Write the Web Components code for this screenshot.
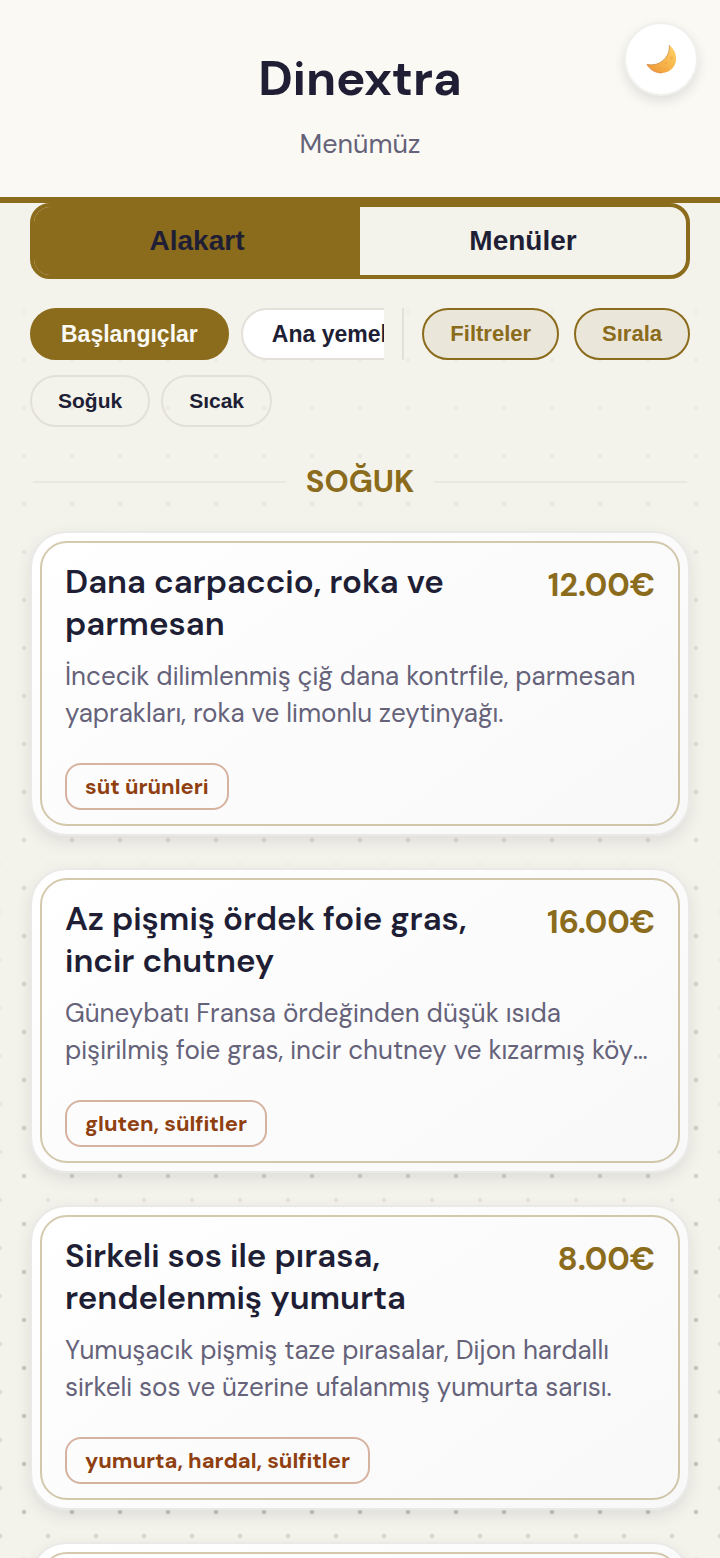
<!DOCTYPE html>
<html lang="tr">
<head>
<meta charset="utf-8">
<meta name="viewport" content="width=device-width, initial-scale=1">
<title>Dinextra</title>
<style>
  :root {
    --gold: #8b6b1c;
    --ink: #201e35;
    --muted: #656279;
    --paper: #f4f3eb;
    --line: #e2e0d9;
    --ui: "Liberation Sans", Arial, sans-serif;
  }
  html, body { margin: 0; height: 100%; }
  body {
    background: var(--paper);
    color: var(--ink);
    font-family: "DM Sans", Inter, sans-serif;
  }
</style>
</head>
<body>
<menu-page>
  <menu-header slot="header" heading="Dinextra" tagline="Menümüz"></menu-header>
  <menu-tabs slot="nav" labels="Alakart|Menüler"></menu-tabs>
  <menu-filters slot="nav">
    <menu-chip slot="category" kind="active">Başlangıçlar</menu-chip>
    <menu-chip slot="category" kind="solid">Ana yemekler</menu-chip>
    <menu-chip slot="action" kind="tool">Filtreler</menu-chip>
    <menu-chip slot="action" kind="tool">Sırala</menu-chip>
    <menu-chip slot="sub">Soğuk</menu-chip>
    <menu-chip slot="sub">Sıcak</menu-chip>
  </menu-filters>
  <menu-section heading="SOĞUK">
    <dish-card price="12.00€" allergens="süt ürünleri">
      <span slot="name">Dana carpaccio, roka ve parmesan</span>
      İncecik dilimlenmiş çiğ dana kontrfile, parmesan yaprakları, roka ve limonlu zeytinyağı.
    </dish-card>
    <dish-card price="16.00€" allergens="gluten, sülfitler">
      <span slot="name">Az pişmiş ördek foie gras, incir chutney</span>
      Güneybatı Fransa ördeğinden düşük ısıda pişirilmiş foie gras, incir chutney ve kızarmış köy ekmeği.
    </dish-card>
    <dish-card price="8.00€" allergens="yumurta, hardal, sülfitler">
      <span slot="name">Sirkeli sos ile pırasa, rendelenmiş yumurta</span>
      Yumuşacık pişmiş taze pırasalar, Dijon hardallı sirkeli sos ve üzerine ufalanmış yumurta sarısı.
    </dish-card>
    <dish-card></dish-card>
  </menu-section>
</menu-page>

<script>
class MenuPage extends HTMLElement {
  constructor() {
    super();
    this.attachShadow({ mode: "open" });
    this.shadowRoot.innerHTML = `
      <style>
        :host {
          display: block;
          position: relative;
          height: 100vh;
          overflow: hidden auto;
          scrollbar-width: none;
          isolation: isolate;
        }
        /* dotted paper: the second grid only shows further down */
        :host::before, :host::after {
          content: "";
          position: absolute;
          inset: 0;
          z-index: -1;
        }
        :host::before {
          background: radial-gradient(circle at 24px 24px, #bdb9ac 1px, transparent 3px) 0 0 / 48px 48px;
          -webkit-mask-image: linear-gradient(transparent 14%, rgba(0, 0, 0, 0.2) 28%, #000);
          mask-image: linear-gradient(transparent 14%, rgba(0, 0, 0, 0.2) 28%, #000);
        }
        :host::after {
          background: radial-gradient(circle at 24px 24px, #d4d0c5 1px, transparent 3px) 24px 24px / 48px 48px;
          -webkit-mask-image: linear-gradient(transparent 50%, #000);
          mask-image: linear-gradient(transparent 50%, #000);
        }
        nav, main { padding: 0 30px; }
      </style>
      <slot name="header"></slot>
      <nav><slot name="nav"></slot></nav>
      <main><slot></slot></main>
    `;
  }
}

class MenuHeader extends HTMLElement {
  constructor() {
    super();
    this.attachShadow({ mode: "open" });
  }

  connectedCallback() {
    this.shadowRoot.innerHTML = `
      <style>
        :host {
          display: block;
          position: relative;
          padding: 48px 30px 35px;
          background: #faf9f4;
          border-bottom: 6px solid var(--gold);
          text-align: center;
        }
        h1 { margin: 0; font-size: 49px; line-height: 60px; font-weight: 700; }
        p { margin: 18px 0 0; font-size: 27px; line-height: 36px; color: var(--muted); }
        button {
          position: absolute;
          top: 22px;
          right: 22px;
          display: grid;
          place-items: center;
          width: 74px;
          height: 74px;
          padding: 0;
          border: 2px solid #f0f0ed;
          border-radius: 50%;
          background: #fff;
          box-shadow: 0 5px 12px rgba(31, 29, 54, 0.12);
        }
        svg { width: 32px; height: 32px; display: block; }
      </style>
      <h1>${this.getAttribute("heading") || ""}</h1>
      <p>${this.getAttribute("tagline") || ""}</p>
      <button type="button" aria-label="Koyu tema">
        <svg viewBox="0 0 32 32" aria-hidden="true">
          <defs>
            <linearGradient id="moon" x1="1" y1="0" x2="0.2" y2="1">
              <stop offset="0" stop-color="#fcd46c"></stop>
              <stop offset="0.55" stop-color="#f9b64a"></stop>
              <stop offset="1" stop-color="#ee9a3c"></stop>
            </linearGradient>
          </defs>
          <path d="M24.3 2.2C29.6 6 32 12.600 30.800 18.600C29.300 25.600 23.600 30 16.800 30C10.500 30 4.600 26.600 2 21.300C8.500 22.800 14.400 21 18.800 16.800C22.800 13 24.800 8.300 24.300 2.200Z" fill="url(#moon)"></path>
          <path d="M24.300 2.200C24.800 8.300 22.800 13 18.800 16.800C14.400 21 8.500 22.800 2 21.300" fill="none" stroke="#c98a45" stroke-width="0.8"></path>
          <path d="M2 21.300C4.600 26.600 10.500 30 16.800 30" fill="none" stroke="#e0803a" stroke-width="0.8"></path>
          <g fill="#f0a040" opacity="0.6">
            <circle cx="14" cy="25.500" r="1.500"></circle>
            <circle cx="21" cy="20" r="1.300"></circle>
            <circle cx="26.500" cy="15" r="1.400"></circle>
            <circle cx="20" cy="26" r="1"></circle>
          </g>
        </svg>
      </button>
    `;
  }
}

class MenuTabs extends HTMLElement {
  constructor() {
    super();
    this.attachShadow({ mode: "open" });
  }

  connectedCallback() {
    const labels = (this.getAttribute("labels") || "").split("|");
    this.shadowRoot.innerHTML = `
      <style>
        :host {
          display: grid;
          grid-auto-flow: column;
          grid-auto-columns: 1fr;
          border: 4px solid var(--gold);
          border-radius: 20px;
          overflow: hidden;
        }
        button {
          padding: 0;
          border: 0;
          background: transparent;
          color: inherit;
          font: 700 28px/68px var(--ui);
        }
        button[aria-pressed="true"] { background: var(--gold); }
      </style>
      ${labels.map((l, i) => `<button type="button" aria-pressed="${i === 0}">${l}</button>`).join("")}
    `;
  }
}

class MenuChip extends HTMLElement {
  constructor() {
    super();
    this.attachShadow({ mode: "open" });
    this.shadowRoot.innerHTML = `
      <style>
        :host { display: block; flex: none; }
        button {
          display: block;
          padding: 0 26px;
          border: 2px solid var(--line);
          border-radius: 26px;
          background: transparent;
          color: var(--ink);
          font: 700 21px/48px var(--ui);
          white-space: nowrap;
        }
        :host([kind="active"]) button, :host([kind="solid"]) button { padding: 0 29px; font-size: 23px; }
        :host([kind="active"]) button { background: var(--gold); border-color: var(--gold); color: #faf9f4; }
        :host([kind="solid"]) button { background: #fff; }
        :host([kind="tool"]) button { background: #eae6da; border-color: var(--gold); color: var(--gold); font-size: 22px; }
      </style>
      <button type="button"><slot></slot></button>
    `;
  }
}

class MenuFilters extends HTMLElement {
  constructor() {
    super();
    this.attachShadow({ mode: "open" });
    this.shadowRoot.innerHTML = `
      <style>
        :host { display: block; padding-top: 29px; }
        .row { display: flex; gap: 18px; }
        .scroll {
          display: flex;
          flex: 1;
          gap: 12px;
          min-width: 0;
          overflow: hidden;
        }
        .actions {
          display: flex;
          gap: 15px;
          padding-left: 18px;
          border-left: 2px solid var(--line);
        }
        .sub { display: flex; gap: 11px; padding-top: 15px; }
      </style>
      <div class="row">
        <div class="scroll"><slot name="category"></slot></div>
        <div class="actions"><slot name="action"></slot></div>
      </div>
      <div class="sub"><slot name="sub"></slot></div>
    `;
  }
}

class MenuSection extends HTMLElement {
  constructor() {
    super();
    this.attachShadow({ mode: "open" });
  }

  connectedCallback() {
    this.shadowRoot.innerHTML = `
      <style>
        :host { display: block; padding: 35px 0 32px; }
        h2 {
          display: flex;
          align-items: center;
          gap: 20px;
          margin: 0 3px 29px;
          color: var(--gold);
          font-size: 31px;
          line-height: 40px;
          font-weight: 700;
        }
        h2::before, h2::after { content: ""; flex: 1; height: 2px; background: #e9e7e0; }
        .list { display: grid; gap: 32px; }
      </style>
      <h2>${this.getAttribute("heading") || ""}</h2>
      <div class="list"><slot></slot></div>
    `;
  }
}

class DishCard extends HTMLElement {
  constructor() {
    super();
    this.attachShadow({ mode: "open" });
  }

  connectedCallback() {
    const allergens = this.getAttribute("allergens");
    this.shadowRoot.innerHTML = `
      <style>
        :host { display: block; }
        article {
          position: relative;
          box-sizing: border-box;
          min-height: 305px;
          padding: 28px 33px 24px;
          border: 2px solid #e9e9e8;
          border-radius: 36px;
          background: linear-gradient(145deg, #fff, #f8f8f9);
          background-clip: padding-box;
          box-shadow: 0 6px 16px rgba(31, 29, 54, 0.1);
        }
        article::after {
          content: "";
          position: absolute;
          inset: 8px;
          border: 2px solid rgba(139, 107, 28, 0.36);
          border-radius: 27px;
          pointer-events: none;
        }
        header { display: flex; justify-content: space-between; gap: 24px; }
        h3 { margin: 0; font-size: 33px; line-height: 42px; font-weight: 600; }
        .price { flex: none; color: var(--gold); font-size: 32px; line-height: 48px; font-weight: 700; }
        p {
          display: -webkit-box;
          -webkit-box-orient: vertical;
          -webkit-line-clamp: 2;
          overflow: hidden;
          margin: 13px 0 31px;
          color: var(--muted);
          font-size: 26px;
          line-height: 37px;
        }
        .allergens {
          display: inline-block;
          vertical-align: top;
          padding: 0 18px;
          border: 2px solid #d6b3a0;
          border-radius: 16px;
          color: #8f3f10;
          font-size: 22px;
          line-height: 43px;
          font-weight: 700;
        }
      </style>
      <article>
        <header>
          <h3><slot name="name"></slot></h3>
          <span class="price">${this.getAttribute("price") || ""}</span>
        </header>
        <p><slot></slot></p>
        ${allergens ? `<span class="allergens">${allergens}</span>` : ""}
      </article>
    `;
  }
}

customElements.define("menu-page", MenuPage);
customElements.define("menu-header", MenuHeader);
customElements.define("menu-tabs", MenuTabs);
customElements.define("menu-chip", MenuChip);
customElements.define("menu-filters", MenuFilters);
customElements.define("menu-section", MenuSection);
customElements.define("dish-card", DishCard);
</script>
</body>
</html>
